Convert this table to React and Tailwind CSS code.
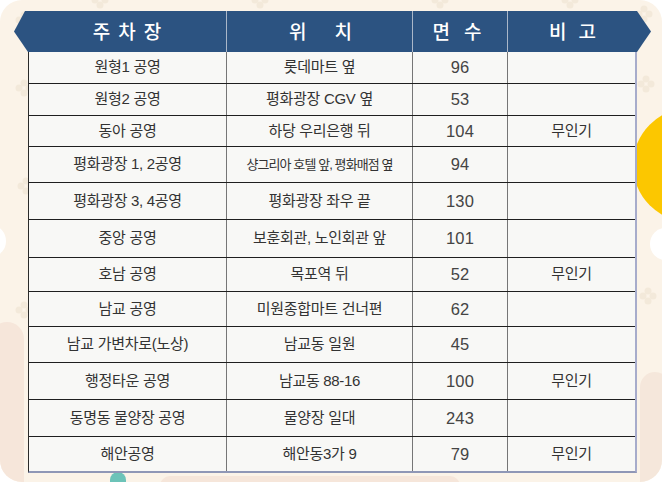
const rows = [
  { name: "원형1 공영", place: "롯데마트 옆", count: "96", note: "", h: "h-[32px]" },
  { name: "원형2 공영", place: "평화광장 CGV 옆", count: "53", note: "", h: "h-[32px]" },
  { name: "동아 공영", place: "하당 우리은행 뒤", count: "104", note: "무인기", h: "h-[31px]" },
  { name: "평화광장 1, 2공영", place: "샹그리아 호텔 앞, 평화매점 옆", count: "94", note: "", h: "h-[36px]", small: true },
  { name: "평화광장 3, 4공영", place: "평화광장 좌우 끝", count: "130", note: "", h: "h-[37px]" },
  { name: "중앙 공영", place: "보훈회관, 노인회관 앞", count: "101", note: "", h: "h-[38px]" },
  { name: "호남 공영", place: "목포역 뒤", count: "52", note: "무인기", h: "h-[34px]" },
  { name: "남교 공영", place: "미원종합마트 건너편", count: "62", note: "", h: "h-[35px]" },
  { name: "남교 가변차로(노상)", place: "남교동 일원", count: "45", note: "", h: "h-[36px]" },
  { name: "행정타운 공영", place: "남교동 88-16", count: "100", note: "무인기", h: "h-[37px]" },
  { name: "동명동 물양장 공영", place: "물양장 일대", count: "243", note: "", h: "h-[37px]" },
  { name: "해안공영", place: "해안동3가 9", count: "79", note: "무인기", h: "h-[34px]" },
];

const flowers = [
  [24, 20], [24, 88], [26, 186], [24, 310], [644, 14], [646, 84], [648, 296],
  [100, 0], [260, 0], [440, 0], [570, 0],
];

function Cell({ children, first, small, num }) {
  const size = small
    ? "text-[13px] tracking-[-0.07em]"
    : num
      ? "text-[16.5px] tracking-[0.01em] text-[#444]"
      : "text-[15px] tracking-[-0.02em]";
  return (
    <div
      className={`flex items-center justify-center ${first ? "" : "border-l border-[#767676]"} ${size}`}
    >
      {children}
    </div>
  );
}

// background artwork: pattern, yellow sun, soft arches
function Backdrop() {
  return (
    <svg className="absolute inset-0" width="662" height="482" viewBox="0 0 662 482">
      {flowers.map(([x, y]) => (
        <g key={`${x}-${y}`} fill="#f3e9da">
          <circle cx={x} cy={y - 5} r="3.5" />
          <circle cx={x} cy={y + 5} r="3.5" />
          <circle cx={x - 5} cy={y} r="3.5" />
          <circle cx={x + 5} cy={y} r="3.5" />
        </g>
      ))}
      <circle cx="690" cy="165" r="57" fill="#fcc700" />
      <ellipse cx="665" cy="244" rx="15" ry="16" fill="#fff" />
      <ellipse cx="-7" cy="241" rx="13" ry="15" fill="#fff" />
      <rect x="-10" y="322" width="34" height="200" rx="17" fill="#f6e6da" />
      <rect x="640" y="372" width="30" height="150" rx="15" fill="#f5e7db" />
      <rect x="110" y="472" width="16" height="30" rx="8" fill="#6cc3b8" />
      <rect x="160" y="476" width="300" height="20" rx="10" fill="#f6e6da" />
    </svg>
  );
}

export default function App() {
  return (
    <div className="relative h-[482px] w-[662px] overflow-hidden rounded-[22px] bg-[#fbf3e8] font-['Liberation_Sans','Noto_Sans_CJK_KR',sans-serif]">
      <Backdrop />

      <div className="relative pl-[28px] pt-[11px]">
        <div className="w-[609px]">
          {/* header */}
          <div className="-mx-[14px] h-[41px] bg-[#2c5381] px-[14px] [clip-path:polygon(0_50%,11px_0,calc(100%-14px)_0,100%_50%,calc(100%-14px)_100%,14px_100%)]">
            <div className="grid h-full grid-cols-[198px_186px_95px_130px] font-['Noto_Sans_CJK_KR',sans-serif] text-[19px] font-medium text-white">
              <div className="flex items-center justify-center gap-[8px]">
                <span>주</span>
                <span>차</span>
                <span>장</span>
              </div>
              <div className="flex items-center justify-center gap-[28px] border-l border-[#aab7c9] pl-[2px]">
                <span>위</span>
                <span>치</span>
              </div>
              <div className="flex items-center justify-center gap-[14px] border-l border-[#aab7c9] pr-[6px]">
                <span>면</span>
                <span>수</span>
              </div>
              <div className="flex items-center justify-center gap-[12px] border-l border-[#aab7c9]">
                <span>비</span>
                <span>고</span>
              </div>
            </div>
          </div>

          {/* body */}
          <div className="border-b-2 border-l border-r-2 border-b-[#8f97b6] border-l-[#2a2a2a] border-r-[#a7accb] bg-[#f8f8f6] text-[#333]">
            {rows.map((r, i) => (
              <div
                key={r.name}
                className={`grid grid-cols-[197px_186px_95px_128px] ${r.h} ${
                  i < rows.length - 1 ? "border-b border-[#1f1f1f]" : ""
                }`}
              >
                <Cell first>{r.name}</Cell>
                <Cell small={r.small}>{r.place}</Cell>
                <Cell num>{r.count}</Cell>
                <Cell>{r.note}</Cell>
              </div>
            ))}
          </div>
        </div>
      </div>
    </div>
  );
}
